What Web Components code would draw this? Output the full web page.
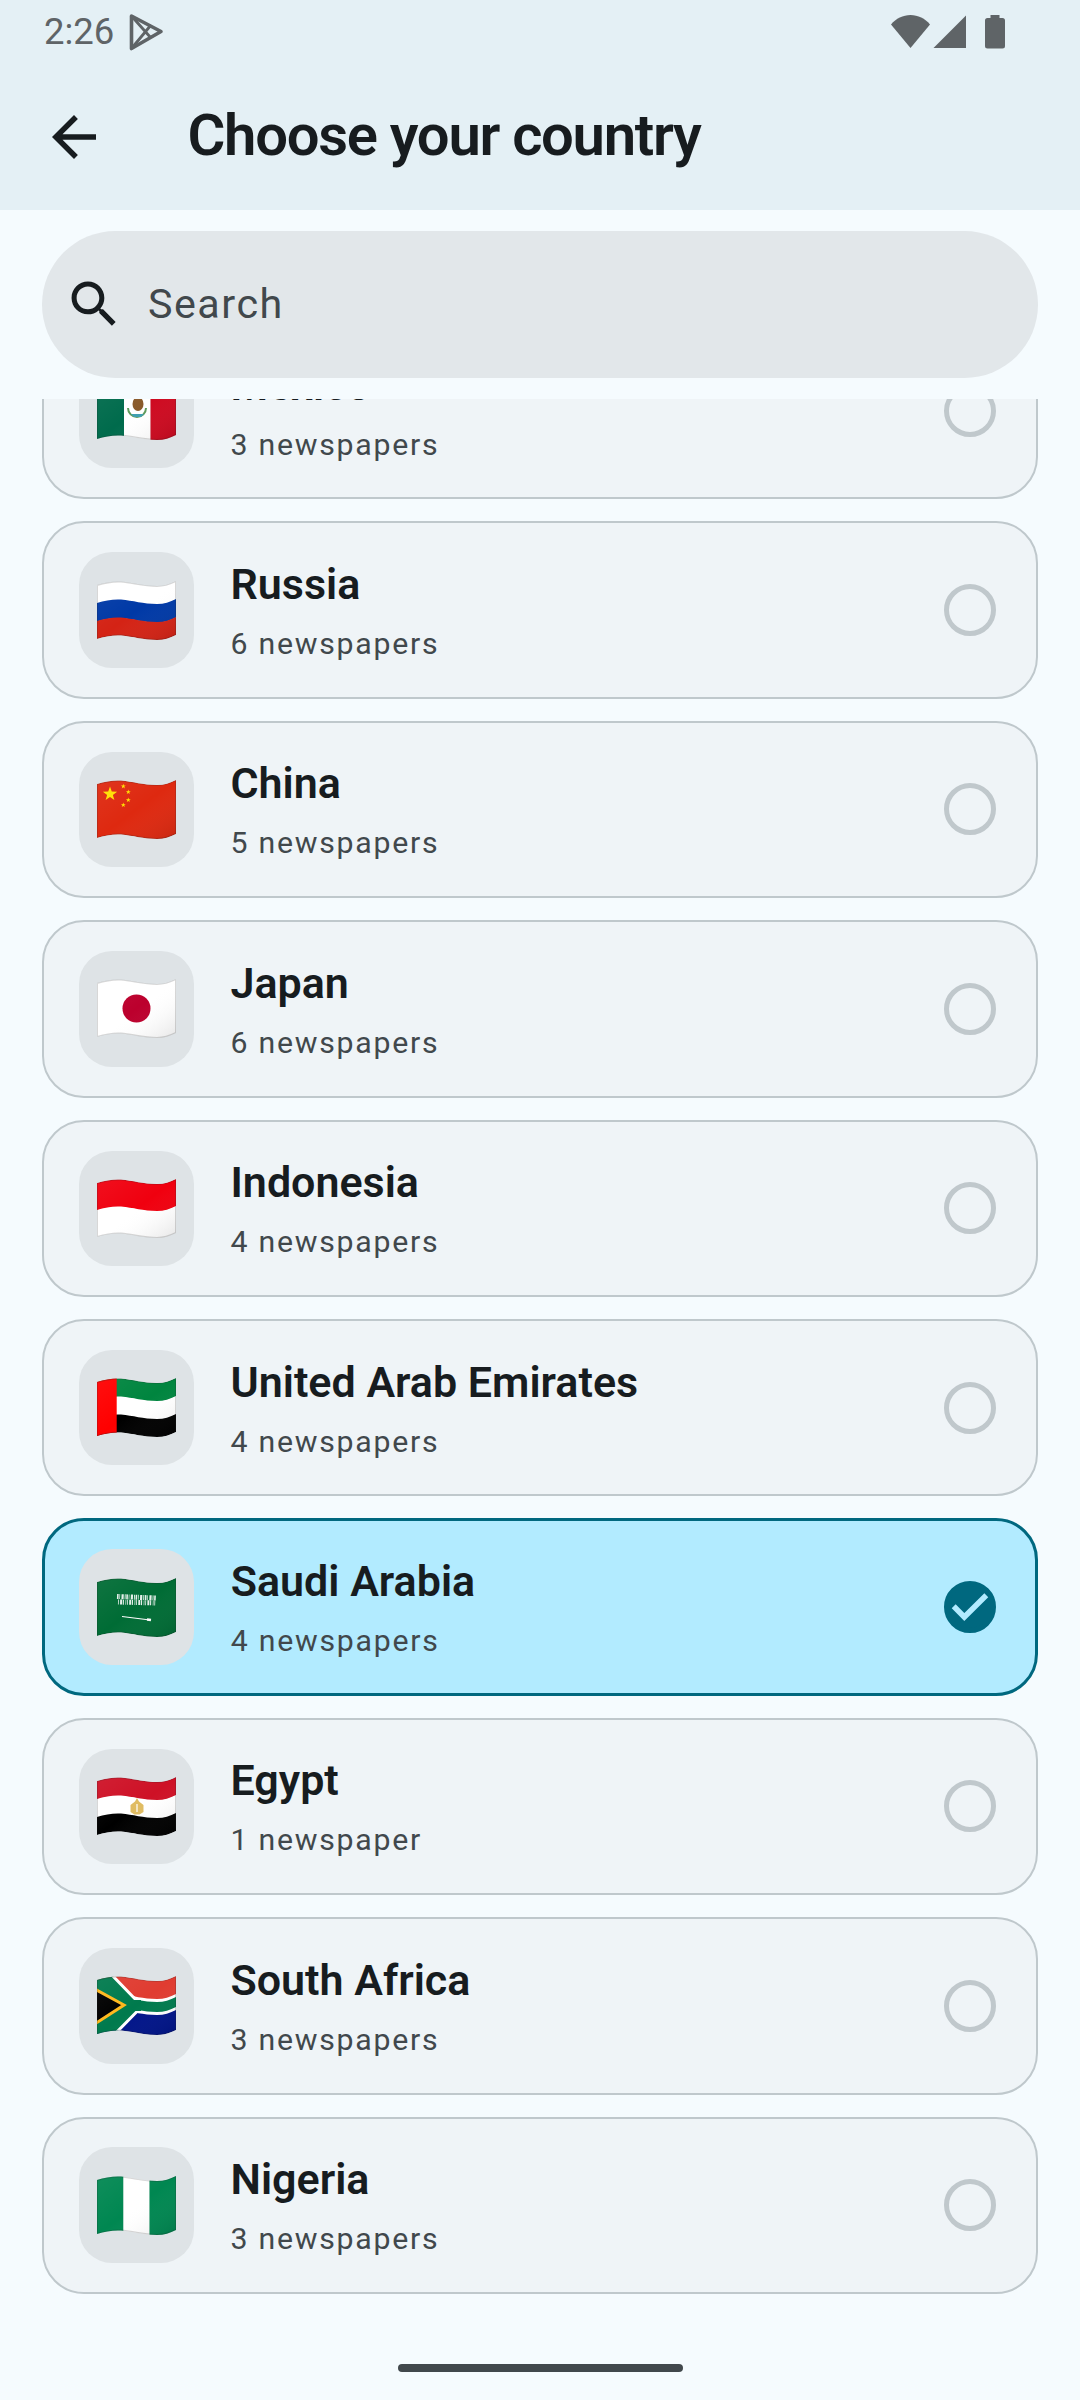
<!DOCTYPE html>
<html lang="en">
<head>
<meta charset="utf-8">
<title>Choose your country</title>
<style>
  html, body {
    background: #f5fbfe;
    height: 100%;
    margin: 0;
    padding: 0;
  }

  body {
    font-family: Roboto, 'Liberation Sans', sans-serif;
    overflow: hidden;
  }
</style>
</head>
<body>

<country-screen>
  <status-strip slot="top" time="2:26"></status-strip>
  <top-bar slot="top">Choose your country</top-bar>
  <search-field slot="search" placeholder="Search"></search-field>
  <country-card flag="mx" count="3 newspapers">Mexico</country-card>
  <country-card flag="ru" count="6 newspapers">Russia</country-card>
  <country-card flag="cn" count="5 newspapers">China</country-card>
  <country-card flag="jp" count="6 newspapers">Japan</country-card>
  <country-card flag="id" count="4 newspapers">Indonesia</country-card>
  <country-card flag="ae" count="4 newspapers">United Arab Emirates</country-card>
  <country-card flag="sa" count="4 newspapers" selected>Saudi Arabia</country-card>
  <country-card flag="eg" count="1 newspaper">Egypt</country-card>
  <country-card flag="za" count="3 newspapers">South Africa</country-card>
  <country-card flag="ng" count="3 newspapers">Nigeria</country-card>
</country-screen>

<script>
class CountryScreen extends HTMLElement {
  constructor() {
    super();

    const template = document.createElement( 'template' );
    template.innerHTML = /* template */ `
      <style>
        :host {
          background: #f5fbfe;
          box-sizing: border-box;
          display: flex;
          flex-direction: column;
          height: 2400px;
          width: 1080px;
        }

        div[part=top] {
          background: #e4f0f5;
          flex: none;
          height: 210px;
        }

        div[part=search] {
          flex: none;
          padding: 21px 42px;
        }

        div[part=list] {
          flex: 1;
          min-height: 0;
          overflow: hidden;
        }

        div[part=rows] {
          display: flex;
          flex-direction: column;
          gap: 22px;
          margin-top: -77px;
          padding: 0 42px;
        }

        div[part=nav] {
          align-items: center;
          display: flex;
          flex: none;
          height: 64px;
          justify-content: center;
        }

        div[part=nav] span {
          background: #41484c;
          border-radius: 4px;
          height: 8px;
          width: 285px;
        }
      </style>
      <div part="top"><slot name="top"></slot></div>
      <div part="search"><slot name="search"></slot></div>
      <div part="list"><div part="rows"><slot></slot></div></div>
      <div part="nav"><span></span></div>
    `;

    this.attachShadow( {mode: 'open'} );
    this.shadowRoot.appendChild( template.content.cloneNode( true ) );
  }
}

class StatusStrip extends HTMLElement {
  constructor() {
    super();

    const template = document.createElement( 'template' );
    template.innerHTML = /* template */ `
      <style>
        :host {
          align-items: center;
          box-sizing: border-box;
          color: #5f6467;
          display: flex;
          font-family: Roboto, sans-serif;
          font-size: 36.5px;
          height: 63px;
          justify-content: space-between;
          padding: 0 75px 0 44px;
        }

        div {
          align-items: center;
          display: flex;
        }

        span {
          line-height: 62px;
        }

        svg {
          display: block;
          fill: #5f6467;
        }
      </style>
      <div>
        <span part="time"></span>
        <svg width="36" height="38" viewBox="0 0 36 38" style="margin-left:14px" fill="none">
          <path d="M3.5 3L33 18.5L3.5 35.5Z" fill="none" stroke="#5f6467" stroke-width="3.6" stroke-linejoin="round"/>
          <path d="M3.5 3L23 25M3.5 35.5L23 12" fill="none" stroke="#5f6467" stroke-width="2.8"/>
        </svg>
      </div>
      <svg width="114" height="34" viewBox="0 0 114 34">
        <path d="M19.5 33L0 9.5C5 3.5 12 0 19.5 0S34 3.5 39 9.5Z"/>
        <path d="M42.5 33L75 .5V33Z"/>
        <path d="M99.5 0H108.5V3H111.5A2.5 2.5 0 0 1 114 5.5V31A2.5 2.5 0 0 1 111.5 33.5H96.5A2.5 2.5 0 0 1 94 31V5.5A2.5 2.5 0 0 1 96.5 3H99.5Z"/>
      </svg>
    `;

    this.attachShadow( {mode: 'open'} );
    this.shadowRoot.appendChild( template.content.cloneNode( true ) );

    this.$time = this.shadowRoot.querySelector( 'span[part=time]' );
  }

  connectedCallback() {
    this.$time.textContent = this.getAttribute( 'time' );
  }
}

class TopBar extends HTMLElement {
  constructor() {
    super();

    const template = document.createElement( 'template' );
    template.innerHTML = /* template */ `
      <style>
        :host {
          align-items: center;
          box-sizing: border-box;
          color: #171c1f;
          display: flex;
          height: 147px;
          padding: 0 0 0 41px;
        }

        svg {
          display: block;
          fill: #171c1f;
          flex: none;
        }

        h1 {
          font-family: Roboto, sans-serif;
          font-size: 58px;
          font-weight: 600;
          letter-spacing: -1.3px;
          line-height: 72px;
          margin: -3px 0 0 80.5px;
        }
      </style>
      <svg width="66" height="66" viewBox="0 0 24 24">
        <path d="M20 11H7.83l5.59-5.59L12 4l-8 8 8 8 1.41-1.41L7.83 13H20v-2z"/>
      </svg>
      <h1><slot></slot></h1>
    `;

    this.attachShadow( {mode: 'open'} );
    this.shadowRoot.appendChild( template.content.cloneNode( true ) );
  }
}

class SearchField extends HTMLElement {
  constructor() {
    super();

    const template = document.createElement( 'template' );
    template.innerHTML = /* template */ `
      <style>
        :host {
          align-items: center;
          background: #e2e7ea;
          border-radius: 74px;
          box-sizing: border-box;
          display: flex;
          gap: 23.5px;
          height: 147px;
          padding: 0 0 0 22px;
        }

        svg {
          display: block;
          fill: #171c1f;
          flex: none;
        }

        span {
          color: #41484c;
          font-family: Roboto, sans-serif;
          font-size: 41.25px;
          letter-spacing: 1.5px;
          line-height: 56px;
          margin-top: -2px;
        }
      </style>
      <svg width="60.5" height="60.5" viewBox="0 0 24 24">
        <path d="M15.5 14h-.79l-.28-.27C15.41 12.59 16 11.11 16 9.5 16 5.91 13.09 3 9.5 3S3 5.91 3 9.5 5.91 16 9.5 16c1.61 0 3.09-.59 4.23-1.57l.27.28v.79l5 4.99L20.49 19l-4.99-5zm-6 0C7.01 14 5 11.99 5 9.5S7.01 5 9.5 5 14 7.01 14 9.5 11.99 14 9.5 14z"/>
      </svg>
      <span part="placeholder"></span>
    `;

    this.attachShadow( {mode: 'open'} );
    this.shadowRoot.appendChild( template.content.cloneNode( true ) );

    this.$placeholder = this.shadowRoot.querySelector( 'span[part=placeholder]' );
  }

  connectedCallback() {
    this.$placeholder.textContent = this.getAttribute( 'placeholder' );
  }
}

// Horizontal strip that follows the wave of the flag
// a and b are the offsets of its upper and lower edge
const strip = ( a, b, fill ) => {
  const up = `M0 ${4 + a}C8 ${1.5 + a} 16 ${a} 24 ${.5 + a}C36 ${1.5 + a} 46 ${5 + a} 60 ${5 + a}C67 ${5 + a} 73 ${3 + a} 79 ${a}`;
  const down = `L79 ${b}C73 ${3 + b} 67 ${5 + b} 60 ${5 + b}C46 ${5 + b} 36 ${1.5 + b} 24 ${.5 + b}C16 ${b} 8 ${1.5 + b} 0 ${4 + b}Z`;
  return `<path d="${up}${down}" fill="${fill}"/>`;
};

const star = ( cx, cy, r ) => {
  const points = [];

  for( let p = 0; p < 10; p++ ) {
    const radius = p % 2 === 0 ? r : r * 0.4;
    const angle = -Math.PI / 2 + p * Math.PI / 5;
    points.push( `${( cx + radius * Math.cos( angle ) ).toFixed( 2 )},${( cy + radius * Math.sin( angle ) ).toFixed( 2 )}` );
  }

  return `<polygon points="${points.join( ' ' )}" fill="#ffe000"/>`;
};

const FLAGS = {
  mx: `
    <rect x="0" y="0" width="27" height="60" fill="#006b4c"/>
    <rect x="27" y="0" width="26.5" height="60" fill="#fff"/>
    <rect x="53.5" y="0" width="26" height="60" fill="#ce0a20"/>
    <path d="M31 27a9 9 0 0 0 18 0" fill="none" stroke="#5e9a5a" stroke-width="2"/>
    <ellipse cx="41" cy="23" rx="5.5" ry="7" fill="#8a5a2b"/>
    <path d="M34 33h13l-3 3h-7z" fill="#3f9fb0"/>
  `,
  ru: strip( 0, 18.5, '#fff' ) + strip( 18, 36.5, '#0039a6' ) + strip( 36, 54, '#d42315' ),
  cn: strip( 0, 54, '#de2910' ) + star( 13, 14, 7.5 ) + star( 26.3, 6.3, 2.6 ) + star( 31.3, 12, 2.6 ) + star( 31.3, 20, 2.6 ) + star( 26.3, 25, 2.6 ),
  jp: strip( 0, 54, '#fff' ) + '<circle cx="39.5" cy="29.5" r="14" fill="#bc002d"/>',
  id: strip( 0, 27.5, '#f0000f' ) + strip( 27, 54, '#fff' ),
  ae: strip( 0, 18.5, '#00853f' ) + strip( 18, 36.5, '#fff' ) + strip( 36, 54, '#000' ) + '<rect x="0" y="0" width="19.7" height="60" fill="#ff0000"/>',
  sa: strip( 0, 54, '#006c35' ) + `
    <g fill="none" stroke="#fff">
      <path d="M20 18.5L59 20" stroke-width="5" stroke-dasharray="1.6 .8 .7 1.4 2.2 1 .9 .7" opacity=".9"/>
      <path d="M21 24L59 25" stroke-width="5" stroke-dasharray=".8 1.3 2 .7 1.1 1.6 .7 .9" opacity=".9"/>
      <path d="M25 38.5L53 42" stroke-width="1.2"/>
      <path d="M50 41.5L54 42" stroke-width="2.4"/>
    </g>
  `,
  eg: strip( 0, 18.5, '#ce1126' ) + strip( 18, 36.5, '#fff' ) + strip( 36, 54, '#000' ) + `
    <path d="M40 21L42 24.5 46.5 28 46.5 35 42.5 37.5H37.5L33.5 35V28L38 24.5Z" fill="#e0bc62"/>
    <path d="M40 27V35" stroke="#fff" stroke-width="1.2"/>
  `,
  za: strip( 0, 27.5, '#e03c31' ) + strip( 27, 54, '#001489' ) + strip( 18, 34, '#fff' ) + strip( 21, 31, '#007a4d' ) + `
    <polygon points="-2,-5 11,-5 41,26 41,34.5 11,65 -2,65" fill="#007a4d" stroke="#fff" stroke-width="3" stroke-linejoin="miter"/>
    <rect x="30" y="24" width="14" height="11" fill="#007a4d"/>
    <polygon points="-4,12 27,29 -4,49" fill="#000" stroke="#ffb81c" stroke-width="3"/>
  `,
  ng: `
    <rect x="0" y="0" width="26.5" height="60" fill="#008751"/>
    <rect x="26.5" y="0" width="26" height="60" fill="#fff"/>
    <rect x="52.5" y="0" width="27" height="60" fill="#008751"/>
  `
};

class FlagIcon extends HTMLElement {
  constructor() {
    super();

    this.attachShadow( {mode: 'open'} );
  }

  // Called by the card once the code is known
  paint( code ) {
    const outline = 'M0 4C8 1.5 16 0 24 .5C36 1.5 46 5 60 5C67 5 73 3 79 0L79 54C73 57 67 59 60 59C46 59 36 55.5 24 54.5C16 54 8 55.5 0 58Z';

    this.shadowRoot.innerHTML = /* template */ `
      <style>
        :host {
          align-items: center;
          background: #dee3e6;
          border-radius: 33px;
          display: flex;
          flex: none;
          height: 115.5px;
          justify-content: center;
          width: 115.5px;
        }

        svg {
          display: block;
        }
      </style>
      <svg width="79" height="59" viewBox="0 0 79 59">
        <defs>
          <clipPath id="wave"><path d="${outline}"/></clipPath>
          <linearGradient id="shade" x1="0" y1="0" x2="1" y2="1">
            <stop offset="0" stop-color="#fff" stop-opacity=".06"/>
            <stop offset=".5" stop-color="#fff" stop-opacity="0"/>
            <stop offset="1" stop-color="#000" stop-opacity=".1"/>
          </linearGradient>
        </defs>
        <g clip-path="url(#wave)">
          ${FLAGS[code]}
          <path d="${outline}" fill="url(#shade)"/>
          <path d="${outline}" fill="none" stroke="#212121" stroke-opacity=".18" stroke-width="2"/>
        </g>
      </svg>
    `;
  }
}

class RadioMark extends HTMLElement {
  constructor() {
    super();

    const template = document.createElement( 'template' );
    template.innerHTML = /* template */ `
      <style>
        :host {
          border: 5px solid #c0c8cc;
          border-radius: 50%;
          box-sizing: border-box;
          display: block;
          flex: none;
          height: 52px;
          width: 52px;
        }

        :host( [checked] ) {
          background: #00687f;
          border-color: #00687f;
        }

        svg {
          display: none;
          margin: -5px;
        }

        :host( [checked] ) svg {
          display: block;
        }
      </style>
      <svg width="52" height="52" viewBox="0 0 52 52">
        <path d="M9.7 25.3L20.3 36L42.3 14.3" fill="none" stroke="#b2ebff" stroke-width="5.5"/>
      </svg>
    `;

    this.attachShadow( {mode: 'open'} );
    this.shadowRoot.appendChild( template.content.cloneNode( true ) );
  }
}

class CountryCard extends HTMLElement {
  constructor() {
    super();

    const template = document.createElement( 'template' );
    template.innerHTML = /* template */ `
      <style>
        :host {
          align-items: center;
          background: #eff4f7;
          border: 2.75px solid #bfc8cc;
          border-radius: 42px;
          box-sizing: border-box;
          display: flex;
          font-family: Roboto, sans-serif;
          height: 177.4px;
          padding: 0 40px 0 34.5px;
        }

        :host( [selected] ) {
          background: #b2ebff;
          border: 3.5px solid #00687f;
          padding: 0 39.25px 0 33.75px;
        }

        div {
          display: flex;
          flex: 1;
          flex-direction: column;
          gap: 12px;
          margin: 0 0 0 36.5px;
          min-width: 0;
        }

        p {
          margin: 0;
          padding: 0;
        }

        p[part=name] {
          color: #171c1f;
          font-size: 43px;
          font-weight: 600;
          line-height: 56px;
        }

        p[part=count] {
          color: #41484c;
          font-size: 30.25px;
          letter-spacing: 1.75px;
          line-height: 40px;
        }
      </style>
      <flag-icon></flag-icon>
      <div>
        <p part="name"><slot></slot></p>
        <p part="count"></p>
      </div>
      <radio-mark></radio-mark>
    `;

    this.attachShadow( {mode: 'open'} );
    this.shadowRoot.appendChild( template.content.cloneNode( true ) );

    this.$flag = this.shadowRoot.querySelector( 'flag-icon' );
    this.$count = this.shadowRoot.querySelector( 'p[part=count]' );
    this.$radio = this.shadowRoot.querySelector( 'radio-mark' );
  }

  connectedCallback() {
    this.$flag.paint( this.getAttribute( 'flag' ) );
    this.$count.textContent = this.getAttribute( 'count' );

    if( this.hasAttribute( 'selected' ) ) {
      this.$radio.setAttribute( 'checked', '' );
    }
  }
}

window.customElements.define( 'flag-icon', FlagIcon );
window.customElements.define( 'radio-mark', RadioMark );
window.customElements.define( 'status-strip', StatusStrip );
window.customElements.define( 'top-bar', TopBar );
window.customElements.define( 'search-field', SearchField );
window.customElements.define( 'country-card', CountryCard );
window.customElements.define( 'country-screen', CountryScreen );
</script>
</body>
</html>
